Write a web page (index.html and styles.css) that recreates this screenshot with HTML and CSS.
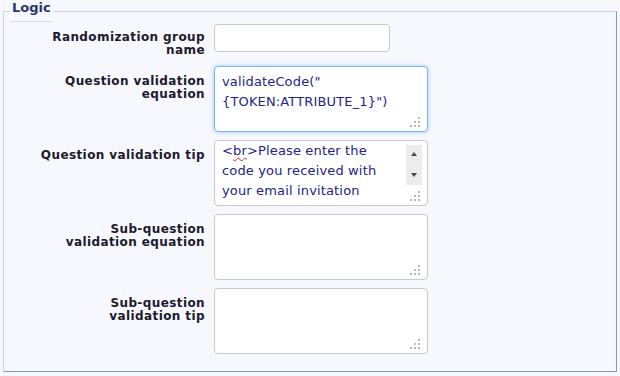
FILE: index.html
```html
<!DOCTYPE html>
<html lang="en">
<head>
<meta charset="utf-8">
<title>Logic</title>
<link rel="stylesheet" href="styles.css">
</head>
<body>
<fieldset class="panel">
  <legend class="panel-title">Logic</legend>

  <div class="row row-first">
    <label class="row-label">Randomization group name</label>
    <div class="field field-input"></div>
  </div>

  <div class="row">
    <label class="row-label">Question validation equation</label>
    <div class="field field-area is-focused pad-top">validateCode("<br>{TOKEN:ATTRIBUTE_1}")<svg class="grip" width="10" height="10" viewBox="0 0 10 10"><rect x="8" y="0" width="2" height="2"/><rect x="4" y="4" width="2" height="2"/><rect x="8" y="4" width="2" height="2"/><rect x="0" y="8" width="2" height="2"/><rect x="4" y="8" width="2" height="2"/><rect x="8" y="8" width="2" height="2"/></svg></div>
  </div>

  <div class="row">
    <label class="row-label">Question validation tip</label>
    <div class="field field-area">&lt;<span class="misspelt">br</span>&gt;Please enter the<br>code you received with<br>your email invitation<div class="scrollbar"><span class="arrow arrow-up"></span><span class="arrow arrow-down"></span></div><svg class="grip" width="10" height="10" viewBox="0 0 10 10"><rect x="8" y="0" width="2" height="2"/><rect x="4" y="4" width="2" height="2"/><rect x="8" y="4" width="2" height="2"/><rect x="0" y="8" width="2" height="2"/><rect x="4" y="8" width="2" height="2"/><rect x="8" y="8" width="2" height="2"/></svg></div>
  </div>

  <div class="row">
    <label class="row-label">Sub-question validation equation</label>
    <div class="field field-area"><svg class="grip" width="10" height="10" viewBox="0 0 10 10"><rect x="8" y="0" width="2" height="2"/><rect x="4" y="4" width="2" height="2"/><rect x="8" y="4" width="2" height="2"/><rect x="0" y="8" width="2" height="2"/><rect x="4" y="8" width="2" height="2"/><rect x="8" y="8" width="2" height="2"/></svg></div>
  </div>

  <div class="row row-last">
    <label class="row-label">Sub-question validation tip</label>
    <div class="field field-area"><svg class="grip" width="10" height="10" viewBox="0 0 10 10"><rect x="8" y="0" width="2" height="2"/><rect x="4" y="4" width="2" height="2"/><rect x="8" y="4" width="2" height="2"/><rect x="0" y="8" width="2" height="2"/><rect x="4" y="8" width="2" height="2"/><rect x="8" y="8" width="2" height="2"/></svg></div>
  </div>
</fieldset>
</body>
</html>
```

FILE: styles.css
```css
html, body {
  margin: 0;
  padding: 0;
  background: #f7f8fe;
}

body {
  font-family: "DejaVu Sans", Verdana, sans-serif;
}

.panel {
  margin: 0 3px 3px 3px;
  padding: 2px 6px 17px 6px;
  border: 1px solid #c6d5ee;
  border-right-color: #7f99c8;
  border-bottom-color: #7f99c8;
  min-width: 0;
}

.panel-title {
  padding: 0 2px 6px 2px;
  font-size: 13px;
  line-height: 15px;
  font-weight: bold;
  color: #26386a;
  border-bottom: 1px solid #dcdcdc;
}

.row {
  display: grid;
  grid-template-columns: 170px auto;
  column-gap: 9px;
  align-items: start;
  padding-left: 25px;
  margin-bottom: 8px;
}

.row-last {
  margin-bottom: 0;
}

.row-label {
  padding-top: 9px;
  font-size: 12px;
  line-height: 13.3px;
  font-weight: bold;
  letter-spacing: 0.4px;
  text-align: right;
  color: #1b1b2c;
}

.row-first .row-label {
  padding-top: 7px;
}

.field {
  position: relative;
  box-sizing: border-box;
  background: #fff;
  border: 1px solid #c9c9c9;
  border-radius: 4px;
  font-size: 13px;
  line-height: 20px;
  letter-spacing: 0.15px;
  color: #232389;
  padding: 0 7px;
}

.field-input {
  width: 176px;
  height: 28px;
}

.field-area {
  width: 214px;
  height: 66px;
}

.pad-top {
  padding-top: 5px;
}

.is-focused {
  border-color: #79b5ef;
  box-shadow: 0 0 4px rgba(110, 175, 240, 0.65);
}

.misspelt {
  text-decoration: underline wavy #e02020;
  text-decoration-thickness: 1px;
  text-decoration-skip-ink: none;
  text-underline-offset: 2px;
}

.grip {
  position: absolute;
  right: 7px;
  bottom: 4px;
  fill: #b9b9b9;
}

.scrollbar {
  position: absolute;
  top: 4px;
  right: 5px;
  width: 16px;
  height: 40px;
  background: #ececec;
}

.arrow {
  position: absolute;
  left: 5px;
  width: 0;
  height: 0;
  border-left: 3px solid transparent;
  border-right: 3px solid transparent;
}

.arrow-up {
  top: 7px;
  border-bottom: 4px solid #4a4a4a;
}

.arrow-down {
  top: 28px;
  border-top: 4px solid #4a4a4a;
}
```
